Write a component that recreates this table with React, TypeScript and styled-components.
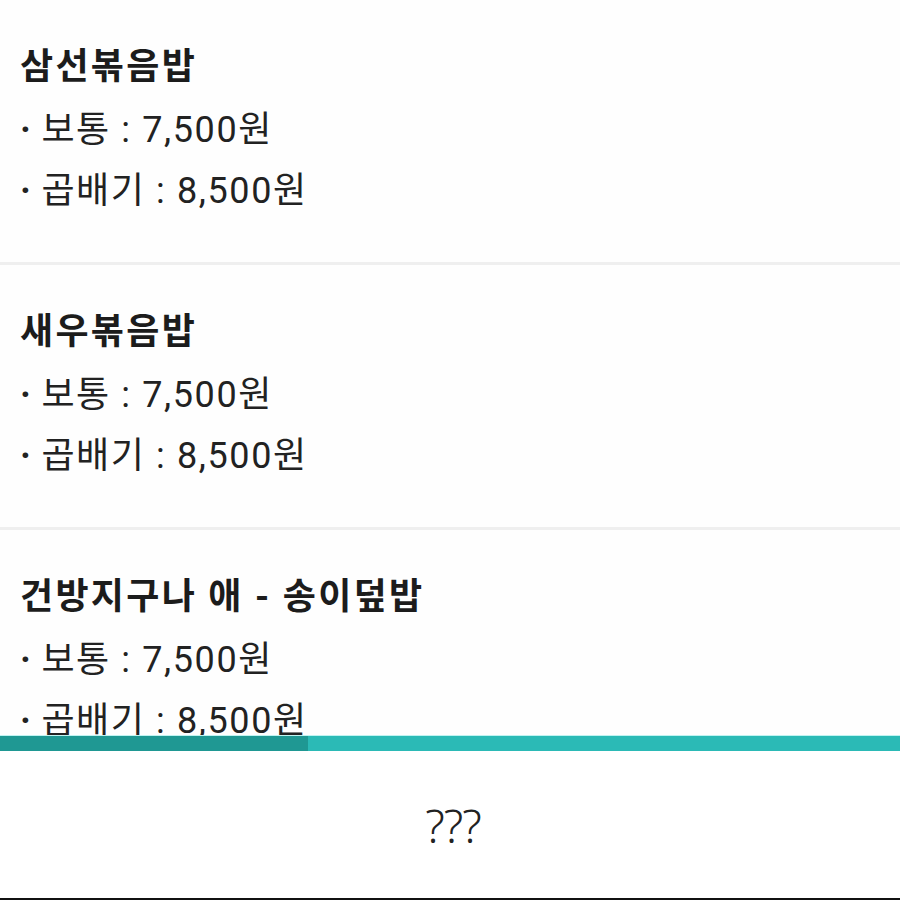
import React from 'react';
import styled, { createGlobalStyle } from 'styled-components';

type MenuItem = {
	name: string;
	regular: string;
	large: string;
};

const menu: MenuItem[] = [
	{ name: '삼선볶음밥', regular: '7,500원', large: '8,500원' },
	{ name: '새우볶음밥', regular: '7,500원', large: '8,500원' },
	{ name: '건방지구나 애 - 송이덮밥', regular: '7,500원', large: '8,500원' },
];

const App: React.FunctionComponent = () => (
	<>
		<GlobalStyle />
		<Page>
			<Viewport>
				{menu.map(item => (
					<Section key={item.name}>
						<Title>{item.name}</Title>
						<Price>
							<Bullet>{'·'}</Bullet>
							{' 보통 : '}{item.regular}
						</Price>
						<Price>
							<Bullet>{'·'}</Bullet>
							{' 곱배기 : '}{item.large}
						</Price>
					</Section>
				))}
			</Viewport>
			<ScrollBar>
				<Thumb />
			</ScrollBar>
			<Caption>{'???'}</Caption>
		</Page>
	</>
);

export default App;

const GlobalStyle = createGlobalStyle`
	html, body {
		margin: 0;
		padding: 0;
		background: #ffffff;
	}
`;

const Page = styled.div`
	display: flex;
	flex-direction: column;
	width: 900px;
	height: 900px;
	box-sizing: border-box;
	border-bottom: 2px solid #111;
	background: #fff;
	font-family: Roboto, 'Noto Sans CJK KR', sans-serif;
	color: #1e1e1e;
	overflow: hidden;
`;

const Viewport = styled.div`
	height: 735px;
	flex-shrink: 0;
	overflow: hidden;
	background: #fefefe;
`;

const Section = styled.div`
	padding: 37px 20px 42px;
	border-bottom: 3px solid #efefef;
`;

const Title = styled.div`
	font-size: 36px;
	font-weight: 700;
	line-height: 61px;
	letter-spacing: 2.3px;
	color: #1c1c1c;
`;

const Price = styled.div`
	font-size: 36px;
	font-weight: 400;
	line-height: 61px;
	color: #222;
	letter-spacing: 1.6px;
	padding-top: 2px;
	margin-bottom: -2px;
`;

const Bullet = styled.span`
	font-weight: 700;
	letter-spacing: 0;
`;

const ScrollBar = styled.div`
	display: flex;
	height: 16px;
	flex-shrink: 0;
	background: #2bbab6;
	border-top: 1px solid #bff3f1;
	box-sizing: border-box;
`;

const Thumb = styled.div`
	width: 308px;
	background: #1f9893;
`;

const Caption = styled.div`
	flex: 1;
	display: flex;
	align-items: center;
	justify-content: center;
	padding-left: 6px;
	font-family: 'Noto Sans', sans-serif;
	font-weight: 300;
	font-size: 46px;
	letter-spacing: -1px;
	color: #222;
`;
